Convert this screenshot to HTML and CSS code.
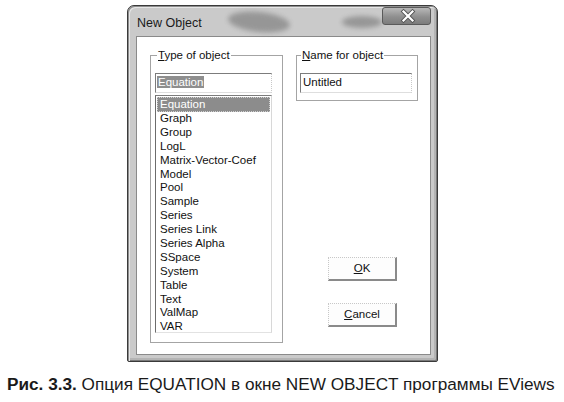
FILE: index.html
```html
<!DOCTYPE html>
<html lang="ru">
<head>
<meta charset="utf-8">
<title>New Object</title>
<link rel="stylesheet" href="styles.css">
</head>
<body>
<div class="window">
  <div class="titlebar">
    <span class="title">New Object</span>
    <span class="smudge smudge-a"></span>
    <span class="smudge smudge-b"></span>
    <span class="close">
      <svg width="49" height="18" viewBox="0 0 49 18">
        <path d="M21.5 4.5 L30.5 13.5 M30.5 4.5 L21.5 13.5" stroke="#555" stroke-width="4" stroke-linecap="square"/>
        <path d="M21.5 4.5 L30.5 13.5 M30.5 4.5 L21.5 13.5" stroke="#fff" stroke-width="2.2" stroke-linecap="square"/>
      </svg>
    </span>
  </div>
  <div class="client">
    <fieldset class="group group-type">
      <legend><u>T</u>ype of object</legend>
      <div class="edit"><span class="sel">Equation</span></div>
      <ul class="listbox">
        <li class="selected">Equation</li>
        <li>Graph</li>
        <li>Group</li>
        <li>LogL</li>
        <li>Matrix-Vector-Coef</li>
        <li>Model</li>
        <li>Pool</li>
        <li>Sample</li>
        <li>Series</li>
        <li>Series Link</li>
        <li>Series Alpha</li>
        <li>SSpace</li>
        <li>System</li>
        <li>Table</li>
        <li>Text</li>
        <li>ValMap</li>
        <li>VAR</li>
      </ul>
    </fieldset>
    <div class="rightcol">
      <fieldset class="group group-name">
        <legend><u>N</u>ame for object</legend>
        <div class="edit edit-name">Untitled</div>
      </fieldset>
      <div class="button btn-ok"><u>O</u>K</div>
      <div class="button btn-cancel"><u>C</u>ancel</div>
    </div>
  </div>
</div>
<p class="caption"><b>Рис. 3.3.</b> Опция EQUATION в окне NEW OBJECT программы EViews</p>
</body>
</html>
```
FILE: styles.css
```css
html, body {
  margin: 0;
  padding: 0;
  background: #fff;
}
body {
  font-family: "Liberation Sans", Arial, sans-serif;
  color: #111;
}
.window {
  margin: 5px 0 0 127px;
  width: 311px;
  height: 357px;
  box-sizing: border-box;
  border: 1px solid #3a3a3a;
  border-radius: 7px 7px 2px 2px;
  background: #cacaca;
  box-shadow: inset 1px 1px 0 #8e8e8e, inset 2px 2px 0 #e6e6e6, inset -1px -1px 0 #7a7a7a, inset -3px -3px 0 #b4b4b4;
  display: flex;
  flex-direction: column;
  padding: 0 6px 6px 8px;
}
.titlebar {
  position: relative;
  height: 30px;
  display: flex;
  justify-content: space-between;
  align-items: flex-start;
}
.title {
  font-size: 12.5px;
  line-height: 16px;
  padding: 9px 0 0 1px;
  color: #1a1a1a;
}
.smudge {
  position: absolute;
  background: #8e8e8e;
  border-radius: 50%;
  filter: blur(2.5px);
  opacity: 0.85;
}
.smudge-a {
  left: 92px;
  top: 6px;
  width: 62px;
  height: 20px;
  transform: rotate(6deg);
}
.smudge-b {
  left: 206px;
  top: 10px;
  width: 40px;
  height: 12px;
}
.close {
  position: relative;
  margin-top: 1px;
  width: 49px;
  height: 18px;
  box-sizing: border-box;
  border: 1px solid #5a5a5a;
  border-radius: 3px;
  background: linear-gradient(#b8b8b8, #8f8f8f 55%, #7c7c7c);
  display: flex;
}
.close svg {
  margin: -1px;
}
.client {
  flex: 1;
  background: #fff;
  border: 1px solid #8a8a8a;
  display: flex;
  align-items: flex-start;
  padding: 11px 0 0 13px;
}
.group {
  margin: 0;
  border: 1px solid #a4a4a4;
  box-sizing: border-box;
  min-width: 0;
}
.group legend {
  font-size: 11.5px;
  line-height: 14px;
  padding: 0 1px;
  color: #111;
}
.group-type {
  width: 133px;
  height: 295px;
  padding: 11px 10px 0 4px;
}
.group-type legend {
  margin-left: 2px;
}
.edit {
  width: 117px;
  height: 20px;
  box-sizing: border-box;
  border-top: 1px solid #7c7c7c;
  border-left: 1px solid #7c7c7c;
  border-right: 1px dotted #c8c8c8;
  border-bottom: 1px solid #dedede;
  font-size: 11.5px;
  line-height: 17px;
  padding-left: 1px;
  white-space: nowrap;
}
.sel {
  background: #8e8e8e;
  color: #fff;
  padding: 0 1px;
}
.listbox {
  list-style: none;
  margin: 2px 0 0;
  padding: 1px 0 0;
  width: 117px;
  height: 238px;
  box-sizing: border-box;
  border-top: 1px solid #7c7c7c;
  border-left: 1px solid #6c6c6c;
  border-right: 1px solid #d8d8d8;
  border-bottom: 1px solid #e2e2e2;
  font-size: 11.5px;
}
.listbox li {
  line-height: 13.9px;
  height: 13.9px;
  padding-left: 4px;
  white-space: nowrap;
}
.listbox li.selected {
  background: #8c8c8c;
  color: #fff;
  outline: 1px dotted #d0d0d0;
  outline-offset: -1px;
  margin: 0 1px 0 1px;
  padding-left: 3px;
  height: 15px;
  line-height: 15px;
}
.rightcol {
  margin-left: 13px;
  display: flex;
  flex-direction: column;
}
.group-name {
  width: 122px;
  height: 53px;
  padding: 11px 0 0 3px;
}
.group-name legend {
  margin-left: 1px;
}
.edit-name {
  width: 112px;
  padding-left: 2px;
}
.button {
  margin-left: 32px;
  width: 69px;
  height: 24px;
  box-sizing: border-box;
  background: #fdfdfd;
  border-top: 1px dotted #c8c8c8;
  border-left: 1px dotted #c8c8c8;
  border-right: 2px solid #8a8a8a;
  border-bottom: 2px solid #8a8a8a;
  font-size: 11.5px;
  line-height: 21px;
  text-align: center;
  color: #111;
}
.btn-ok {
  margin-top: 156px;
}
.btn-cancel {
  margin-top: 22px;
}
.caption {
  margin: 12px 0 0 7px;
  font-size: 17.2px;
  line-height: 20px;
  color: #1a1a1a;
  white-space: nowrap;
}
```
